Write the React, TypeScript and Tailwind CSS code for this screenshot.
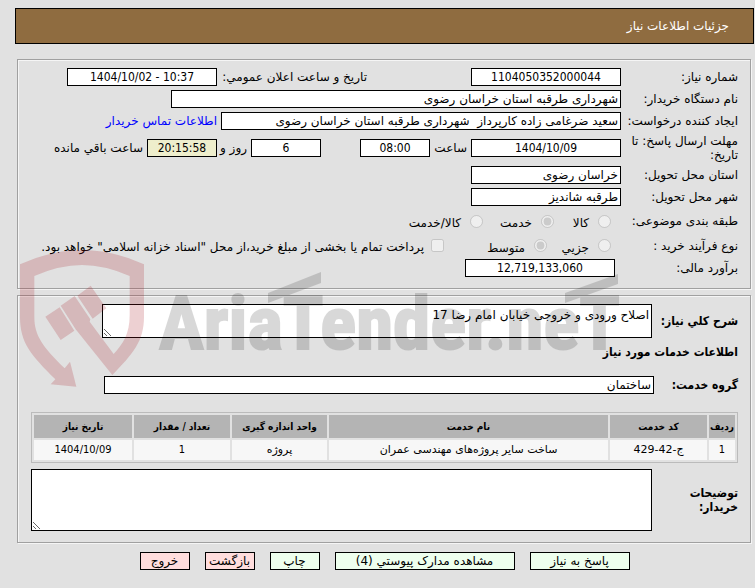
import type { ReactNode } from "react";

const box = "h-[18px] border border-black bg-white px-0.5 text-[12px] text-black";
const numeric = "text-center font-['DejaVu_Sans_Condensed','DejaVu_Sans',sans-serif]";
const bold = "font-bold font-['DejaVu_Sans_Condensed','DejaVu_Sans',sans-serif]";
const panel = "mr-[3px] ml-0.5 min-w-0 border border-[#a0a0a0] pr-3 pl-[13px] shadow-[1px_1px_0_#f5f5f5,inset_1px_1px_0_#f5f5f5]";

function Row({ label, htmlFor, height = "h-[22px]", children }: { label: string; htmlFor?: string; height?: string; children: ReactNode }) {
    return (
        <div className={`flex items-center ${height}`}>
            <label htmlFor={htmlFor} className="w-[117px] shrink-0 leading-[14px]">{label}</label>
            {children}
        </div>
    )
}

function Choice({ name, label, width, checked = false }: { name: string; label: string; width: string; checked?: boolean }) {
    return (
        <label className={`flex shrink-0 items-center gap-[9px] whitespace-nowrap ${width}`}>
            <input type="radio" name={name} defaultChecked={checked} disabled className="size-[13px] shrink-0" />
            <span className="pt-1">{label}</span>
        </label>
    )
}

function Watermark() {
    return (
        <div className="absolute left-5 top-[250px] flex items-start gap-3.5 pointer-events-none select-none" dir="ltr">
            <svg width="125" height="138" viewBox="61 150 375 414" className="fill-[#a5141e]/20">
                <path d="M61 193Q155 150 247 150Q340 150 433 193V350C433 425 398 462 338 525L228 388L183 317L225 288L272 358L270 365L342 462C370 432 390 402 390 345V228Q315 195 247 195Q179 195 104 228V350C104 408 130 440 195 505L211 485L230 560L153 553L167 538C95 465 61 430 61 350Z" />
                <path d="M137 350L180 322L224 392L183 420ZM233 287L273 257L320 325L279 356Z" />
            </svg>
            <div className="relative pt-[36px] opacity-15">
                <svg width="460" height="60" viewBox="0 0 460 60" className="absolute left-0 top-0 fill-black">
                    <path d="M109 43L162 22V33L109 53ZM406 43L459 24V34L406 53Z" />
                </svg>
                <span className="block font-['Roboto_Condensed','Liberation_Sans_Narrow','Liberation_Sans',sans-serif] text-[75px] leading-[74px] font-bold text-black [-webkit-text-stroke:2px_black]">AriaTender.neT</span>
            </div>
        </div>
    )
}

const columns = [
    { title: "ردیف", value: "1", width: "w-[26px]" },
    { title: "کد خدمت", value: "ج-42-429", width: "w-[97px]" },
    { title: "نام خدمت", value: "ساخت سایر پروژه‌های مهندسی عمران", width: "" },
    { title: "واحد اندازه گیری", value: "پروژه", width: "w-[95px]" },
    { title: "تعداد / مقدار", value: "1", width: "w-[96px]" },
    { title: "تاریخ نیاز", value: "1404/10/09", width: "w-[98px]" },
];

const actions = [
    { label: "پاسخ به نیاز", style: "w-[100px] bg-[#eeffee]" },
    { label: "مشاهده مدارک پیوستي (4)", style: "w-[180px] bg-[#eeffee]" },
    { label: "چاپ", style: "w-[50px] bg-[#eeffee]" },
    { label: "بازگشت", style: "w-[50px] bg-[#ffdddd]" },
    { label: "خروج", style: "w-[50px] bg-[#ffdddd]" },
];

export default function App() {
    return (
        <main dir="rtl" lang="fa" className="relative min-h-screen bg-[#e1e1e1] pt-2 pb-4 pl-[15px] pr-px font-['DejaVu_Sans',sans-serif] text-[12px] text-black">
            <header className="flex h-9 items-center border border-black bg-[#8f6c40] px-6 text-white">
                <h1>جزئیات اطلاعات نیاز</h1>
            </header>

            <fieldset className={`${panel} mt-[15px] pt-1.5 pb-[9px]`}>
                <Row label="شماره نیاز:" htmlFor="number">
                    <input id="number" readOnly defaultValue="1104050352000044" className={`${box} ${numeric} w-[150px]`} />
                    <label htmlFor="announced" className="ms-[104px] w-[150px] whitespace-nowrap">تاریخ و ساعت اعلان عمومي:</label>
                    <input id="announced" readOnly dir="ltr" defaultValue="1404/10/02 - 10:37" className={`${box} ${numeric} w-[150px]`} />
                </Row>
                <Row label="نام دستگاه خریدار:" htmlFor="buyer">
                    <input id="buyer" readOnly defaultValue="شهرداری طرقبه استان خراسان رضوی" className={`${box} w-[450px]`} />
                </Row>
                <Row label="ایجاد کننده درخواست:" htmlFor="creator">
                    <input id="creator" readOnly defaultValue="سعید ضرغامی زاده کارپرداز  شهرداری طرقبه استان خراسان رضوی" className={`${box} w-[400px]`} />
                    <a href="#contact" className="ms-1 whitespace-nowrap text-[#0000ff]">اطلاعات تماس خریدار</a>
                </Row>
                <Row label="مهلت ارسال پاسخ: تا تاریخ:" htmlFor="deadline" height="h-8">
                    <input id="deadline" readOnly dir="ltr" defaultValue="1404/10/09" className={`${box} ${numeric} w-[150px]`} />
                    <label htmlFor="hour" className="w-[41px] ps-1">ساعت</label>
                    <input id="hour" readOnly dir="ltr" defaultValue="08:00" className={`${box} ${numeric} w-[70px]`} />
                    <input aria-label="روز" readOnly defaultValue="6" className={`${box} ${numeric} ms-[39px] w-[70px]`} />
                    <span className="w-[34px] ps-1 whitespace-nowrap">روز و</span>
                    <input id="remaining" readOnly dir="ltr" defaultValue="20:15:58" className={`${numeric} h-[18px] w-[70px] border border-black bg-[#eeeecc] px-0.5`} />
                    <label htmlFor="remaining" className="ps-1 whitespace-nowrap">ساعت باقي مانده</label>
                </Row>
                <Row label="استان محل تحویل:" htmlFor="province">
                    <input id="province" readOnly defaultValue="خراسان رضوی" className={`${box} w-[150px]`} />
                </Row>
                <Row label="شهر محل تحویل:" htmlFor="city">
                    <input id="city" readOnly defaultValue="طرقبه شاندیز" className={`${box} w-[150px]`} />
                </Row>
                <Row label="طبقه بندی موضوعی:" height="h-[26px]">
                    <div className="flex ps-[10px]">
                        <Choice name="category" label="کالا" width="w-[57px]" />
                        <Choice name="category" label="خدمت" width="w-[71px]" checked />
                        <Choice name="category" label="کالا/خدمت" width="" />
                    </div>
                </Row>
                <Row label="نوع فرآیند خرید :" height="h-[23px]">
                    <div className="flex ps-[10px]">
                        <Choice name="process" label="جزیي" width="w-16" />
                        <Choice name="process" label="متوسط" width="w-[103px]" checked />
                    </div>
                    <label className="flex items-center gap-[7px] whitespace-nowrap">
                        <input type="checkbox" disabled className="size-[13px] shrink-0" />
                        <span className="pt-0.5">پرداخت تمام یا بخشی از مبلغ خرید،از محل "اسناد خزانه اسلامی" خواهد بود.</span>
                    </label>
                </Row>
                <Row label="برآورد مالی:" htmlFor="estimate">
                    <input id="estimate" readOnly defaultValue="12,719,133,060" className={`${box} ${numeric} ms-1.5 w-[150px]`} />
                </Row>
            </fieldset>

            <fieldset className={`${panel} mt-1.5 pt-2 pb-[11px]`}>
                <div className="flex items-center">
                    <label htmlFor="summary" className={`${bold} w-[86px] shrink-0 whitespace-nowrap`}>شرح کلي نیاز:</label>
                    <textarea id="summary" readOnly defaultValue="اصلاح ورودی و خروجی خیابان امام رضا 17" className="block h-[34px] w-[550px] border border-black bg-white px-0.5 leading-5" />
                </div>
                <h2 className={`${bold} mt-1.5 leading-4`}>اطلاعات خدمات مورد نیاز</h2>
                <div className="mt-4 flex items-center">
                    <label htmlFor="group" className={`${bold} w-[84px] shrink-0`}>گروه خدمت:</label>
                    <input id="group" readOnly defaultValue="ساختمان" className={`${box} w-[550px]`} />
                </div>

                <table className="mt-[18px] w-full table-fixed border-separate border-spacing-0.5 border border-[#bbbbbb] text-center text-[11px]">
                    <thead>
                        <tr className="h-[23px]">
                            {columns.map((c) => (
                                <th key={c.title} className={`${c.width} ${bold} bg-[#b4b4b4] p-0 whitespace-nowrap text-[10px]`}>{c.title}</th>
                            ))}
                        </tr>
                    </thead>
                    <tbody>
                        <tr className="h-5">
                            {columns.map((c) => (
                                <td key={c.title} className={`bg-[#f7f7f7] p-0 ${/^[\d/]+$/.test(c.value) ? "font-['DejaVu_Sans_Condensed','DejaVu_Sans',sans-serif]" : ""}`}>{c.value}</td>
                            ))}
                        </tr>
                    </tbody>
                </table>

                <div className="mt-[6px] flex items-center">
                    <label htmlFor="notes" className={`${bold} w-[86px] shrink-0 leading-[14px]`}>توضیحات خریدار:</label>
                    <textarea id="notes" readOnly className="block h-[62px] min-w-0 flex-1 border border-black bg-white p-0.5" />
                </div>
            </fieldset>

            <div className="mt-[9px] flex justify-center gap-[15px]">
                {actions.map((a) => (
                    <button key={a.label} type="button" className={`h-[18px] border border-black leading-4 whitespace-nowrap ${a.style}`}>{a.label}</button>
                ))}
            </div>

            <Watermark />
        </main>
    )
}
